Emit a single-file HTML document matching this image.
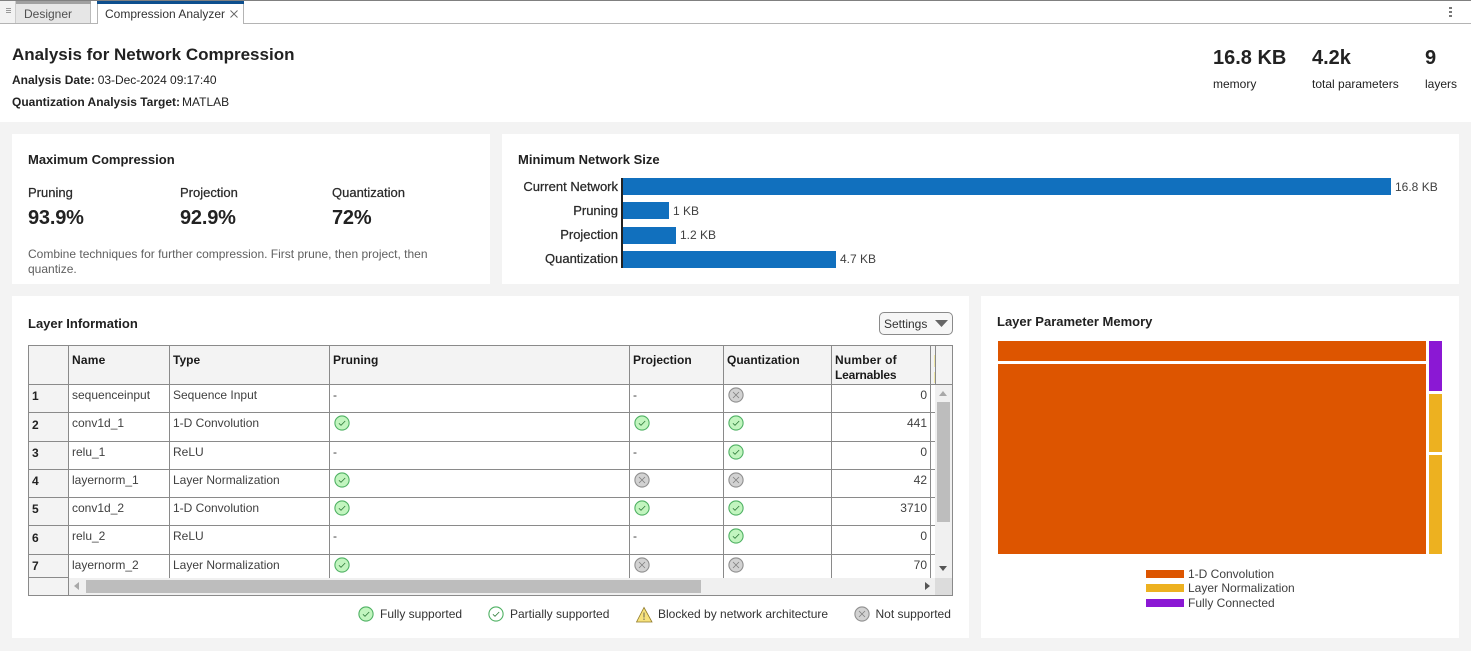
<!DOCTYPE html>
<html><head><meta charset="utf-8"><style>
html,body{margin:0;padding:0;width:1471px;height:651px;overflow:hidden;background:#f3f3f3;font-family:"Liberation Sans",Arial,sans-serif;color:#222}
div,span.a,svg.a{position:absolute}
.t{position:absolute;white-space:nowrap;line-height:14px;font-size:12px}
.b{font-weight:bold}
.h{font-size:13px;font-weight:bold;color:#212121}
.g{color:#404040}
.m{font-size:13px;color:#2a2a2a;-webkit-text-stroke:.25px #2a2a2a}
.th{font-weight:bold;color:#1a1a1a;font-size:12px}
.l{position:absolute;background:#8a8a8a}
.w{background:#fff}
svg.i{position:absolute;width:16px;height:16px}
</style></head><body>
<svg width="0" height="0" style="position:absolute"><defs>
<symbol id="ok" viewBox="0 0 16 16"><circle cx="8" cy="8" r="7.1" fill="#c2f5bf" stroke="#4fb163" stroke-width="1.1"/><path d="M4.9 8.3 7 10.3 11.2 6" fill="none" stroke="#2f7a3a" stroke-width=".8"/></symbol>
<symbol id="part" viewBox="0 0 16 16"><circle cx="8" cy="8" r="7.1" fill="#fff" stroke="#4fb163" stroke-width="1.1"/><path d="M4.9 8.3 7 10.3 11.2 6" fill="none" stroke="#2f7a3a" stroke-width=".8"/></symbol>
<symbol id="no" viewBox="0 0 16 16"><circle cx="8" cy="8" r="7.1" fill="#d2d2d2" stroke="#8f8f8f" stroke-width="1.1"/><path d="M5 5 11 11M11 5 5 11" fill="none" stroke="#808080" stroke-width=".8"/></symbol>
</defs></svg>

<!-- tab bar -->
<div class="w" style="left:0;top:0;width:1471px;height:23px"></div>
<div style="left:0;top:0;width:1471px;height:1px;background:#808080"></div>
<div style="left:0;top:23px;width:1471px;height:1px;background:#b4b4b4"></div>
<div style="left:0;top:1px;width:15px;height:22px;background:#f2f2f2"></div>
<div style="left:6px;top:8px;width:5px;height:6px;background:repeating-linear-gradient(#999 0 1px,#f2f2f2 1px 2px)"></div>
<div style="left:15px;top:1px;width:76px;height:22px;background:#e6e6e6;border-right:1px solid #bbb;border-left:1px solid #ccc;box-sizing:border-box"></div>
<div style="left:16px;top:1px;width:75px;height:3px;background:#a0a0a0"></div>
<div class="t" style="left:24px;top:7px;color:#505050">Designer</div>
<div class="w" style="left:97px;top:1px;width:147px;height:23px;box-sizing:border-box;border-left:1px solid #b4b4b4;border-right:1px solid #b4b4b4"></div>
<div style="left:97px;top:1px;width:147px;height:3px;background:#0e4f8e"></div>
<div class="t" style="left:105px;top:7px;color:#333">Compression Analyzer</div>
<svg class="a" style="left:229px;top:9px" width="10" height="10"><path d="M1.5 1.5 8.5 8.5M8.5 1.5 1.5 8.5" stroke="#666" stroke-width=".9" fill="none"/></svg>
<div style="left:1449px;top:7px;width:3px;height:2px;background:#777"></div>
<div style="left:1449px;top:11px;width:3px;height:2px;background:#777"></div>
<div style="left:1449px;top:15px;width:3px;height:2px;background:#777"></div>

<!-- header -->
<div class="w" style="left:0;top:24px;width:1471px;height:98px"></div>
<div class="t b" style="left:12px;top:46px;font-size:17px;line-height:18px;color:#212121">Analysis for Network Compression</div>
<div class="t" style="left:12px;top:73px"><span class="b">Analysis Date:</span><span style="margin-left:3px;letter-spacing:-.03px">03-Dec-2024 09:17:40</span></div>
<div class="t" style="left:12px;top:95px"><span class="b">Quantization Analysis Target:</span><span style="margin-left:2px">MATLAB</span></div>
<div class="t b" style="left:1213px;top:47px;font-size:20px;line-height:22px">16.8 KB</div>
<div class="t b" style="left:1312px;top:47px;font-size:20px;line-height:22px">4.2k</div>
<div class="t b" style="left:1425px;top:47px;font-size:20px;line-height:22px">9</div>
<div class="t" style="left:1213px;top:77px">memory</div>
<div class="t" style="left:1312px;top:77px">total parameters</div>
<div class="t" style="left:1425px;top:77px">layers</div>

<!-- panels -->
<div class="w" style="left:12px;top:134px;width:478px;height:150px"></div>
<div class="w" style="left:502px;top:134px;width:957px;height:150px"></div>
<div class="w" style="left:12px;top:296px;width:957px;height:342px"></div>
<div class="w" style="left:981px;top:296px;width:478px;height:342px"></div>

<!-- max compression -->
<div class="t h" style="left:28px;top:153px">Maximum Compression</div>
<div class="t m" style="left:28px;top:186px">Pruning</div>
<div class="t m" style="left:180px;top:186px">Projection</div>
<div class="t m" style="left:332px;top:186px">Quantization</div>
<div class="t b" style="left:28px;top:207px;font-size:20px;line-height:22px;letter-spacing:-.2px">93.9%</div>
<div class="t b" style="left:180px;top:207px;font-size:20px;line-height:22px;letter-spacing:-.2px">92.9%</div>
<div class="t b" style="left:332px;top:207px;font-size:20px;line-height:22px;letter-spacing:-.2px">72%</div>
<div class="t" style="left:28px;top:247px;color:#606060">Combine techniques for further compression. First prune, then project, then</div>
<div class="t" style="left:28px;top:262px;color:#606060">quantize.</div>

<!-- min size -->
<div class="t h" style="left:518px;top:153px">Minimum Network Size</div>
<div class="t m" style="right:853px;top:180px">Current Network</div>
<div class="t m" style="right:853px;top:204px">Pruning</div>
<div class="t m" style="right:853px;top:228px">Projection</div>
<div class="t m" style="right:853px;top:252px">Quantization</div>
<div style="left:623px;top:178px;width:768px;height:17px;background:#1170be"></div>
<div style="left:623px;top:202px;width:46px;height:17px;background:#1170be"></div>
<div style="left:623px;top:227px;width:53px;height:17px;background:#1170be"></div>
<div style="left:623px;top:251px;width:213px;height:17px;background:#1170be"></div>
<div style="left:621px;top:178px;width:2px;height:90px;background:#222"></div>
<div class="t g" style="left:1395px;top:180px">16.8 KB</div>
<div class="t g" style="left:673px;top:204px">1 KB</div>
<div class="t g" style="left:680px;top:228px">1.2 KB</div>
<div class="t g" style="left:840px;top:252px">4.7 KB</div>

<!-- layer info -->
<div class="t h" style="left:28px;top:317px">Layer Information</div>
<div style="left:879px;top:312px;width:74px;height:23px;box-sizing:border-box;border:1px solid #8a8a8a;border-radius:5px;background:#f6f6f6"></div>
<div class="t" style="left:884px;top:317px;color:#333">Settings</div>
<svg class="a" style="left:935px;top:320px" width="13" height="8"><path d="M0 0H13L6.5 7Z" fill="#666"/></svg>

<!-- table -->
<div style="left:28px;top:345px;width:925px;height:39px;background:#f3f3f3"></div>
<div style="left:28px;top:384px;width:40px;height:212px;background:#f3f3f3"></div>
<div style="left:935px;top:384px;width:18px;height:194px;background:#f0f0f0"></div>
<div style="left:69px;top:578px;width:866px;height:17px;background:#f0f0f0"></div>
<div style="left:935px;top:578px;width:18px;height:17px;background:#dcdcdc"></div>
<div style="left:86px;top:580px;width:615px;height:13px;background:#bdbdbd"></div>
<div style="left:937px;top:402px;width:13px;height:120px;background:#bdbdbd"></div>
<svg class="a" style="left:939px;top:391px" width="9" height="6"><path d="M0 5H8L4 0Z" fill="#a8a8a8"/></svg>
<svg class="a" style="left:939px;top:566px" width="9" height="6"><path d="M0 0H8L4 5Z" fill="#555"/></svg>
<svg class="a" style="left:74px;top:582px" width="6" height="9"><path d="M5 0V8L0 4Z" fill="#a8a8a8"/></svg>
<svg class="a" style="left:925px;top:582px" width="6" height="9"><path d="M0 0V8L5 4Z" fill="#555"/></svg>

<!-- grid -->
<div class="l" style="left:28px;top:345px;width:925px;height:1px"></div>
<div class="l" style="left:28px;top:595px;width:925px;height:1px"></div>
<div class="l" style="left:28px;top:345px;width:1px;height:251px"></div>
<div class="l" style="left:952px;top:345px;width:1px;height:251px"></div>
<div class="l" style="left:68px;top:345px;width:1px;height:251px"></div>
<div class="l" style="left:169px;top:345px;width:1px;height:233px"></div>
<div class="l" style="left:329px;top:345px;width:1px;height:233px"></div>
<div class="l" style="left:629px;top:345px;width:1px;height:233px"></div>
<div class="l" style="left:723px;top:345px;width:1px;height:233px"></div>
<div class="l" style="left:831px;top:345px;width:1px;height:233px"></div>
<div class="l" style="left:930px;top:345px;width:1px;height:233px"></div>
<div class="l" style="left:935px;top:345px;width:1px;height:39px"></div>
<div style="left:934px;top:355px;width:1px;height:12px;background:#f0e8a8"></div>
<div style="left:934px;top:372px;width:1px;height:11px;background:#f0e8a8"></div>
<div class="l" style="left:28px;top:384px;width:925px;height:1px"></div>
<div class="l" style="left:28px;top:412px;width:907px;height:1px"></div>
<div class="l" style="left:28px;top:441px;width:907px;height:1px"></div>
<div class="l" style="left:28px;top:469px;width:907px;height:1px"></div>
<div class="l" style="left:28px;top:497px;width:907px;height:1px"></div>
<div class="l" style="left:28px;top:525px;width:907px;height:1px"></div>
<div class="l" style="left:28px;top:554px;width:907px;height:1px"></div>
<div class="l" style="left:28px;top:577px;width:40px;height:1px"></div>

<!-- header text -->
<div class="t th" style="left:72px;top:353px;letter-spacing:.2px">Name</div>
<div class="t th" style="left:173px;top:353px">Type</div>
<div class="t th" style="left:333px;top:353px">Pruning</div>
<div class="t th" style="left:633px;top:353px">Projection</div>
<div class="t th" style="left:727px;top:353px">Quantization</div>
<div class="t th" style="left:835px;top:353px;letter-spacing:.2px">Number of</div>
<div class="t th" style="left:835px;top:368px;letter-spacing:-.2px">Learnables</div>

<!-- rows -->
<div class="t b" style="left:32px;top:389px">1</div>
<div class="t b" style="left:32px;top:418px">2</div>
<div class="t b" style="left:32px;top:446px">3</div>
<div class="t b" style="left:32px;top:474px">4</div>
<div class="t b" style="left:32px;top:502px">5</div>
<div class="t b" style="left:32px;top:531px">6</div>
<div class="t b" style="left:32px;top:559px">7</div>

<div class="t g" style="left:72px;top:388px">sequenceinput</div><div class="t g" style="left:173px;top:388px">Sequence Input</div>
<div class="t g" style="left:72px;top:416px">conv1d_1</div><div class="t g" style="left:173px;top:416px">1-D Convolution</div>
<div class="t g" style="left:72px;top:445px">relu_1</div><div class="t g" style="left:173px;top:445px">ReLU</div>
<div class="t g" style="left:72px;top:473px">layernorm_1</div><div class="t g" style="left:173px;top:473px">Layer Normalization</div>
<div class="t g" style="left:72px;top:501px">conv1d_2</div><div class="t g" style="left:173px;top:501px">1-D Convolution</div>
<div class="t g" style="left:72px;top:529px">relu_2</div><div class="t g" style="left:173px;top:529px">ReLU</div>
<div class="t g" style="left:72px;top:558px">layernorm_2</div><div class="t g" style="left:173px;top:558px">Layer Normalization</div>

<div class="t g" style="left:333px;top:388px">-</div><div class="t g" style="left:633px;top:388px">-</div>
<div class="t g" style="left:333px;top:445px">-</div><div class="t g" style="left:633px;top:445px">-</div>
<div class="t g" style="left:333px;top:529px">-</div><div class="t g" style="left:633px;top:529px">-</div>

<div class="t g" style="right:544px;top:388px">0</div>
<div class="t g" style="right:544px;top:416px">441</div>
<div class="t g" style="right:544px;top:445px">0</div>
<div class="t g" style="right:544px;top:473px">42</div>
<div class="t g" style="right:544px;top:501px">3710</div>
<div class="t g" style="right:544px;top:529px">0</div>
<div class="t g" style="right:544px;top:558px">70</div>

<svg class="i" style="left:728px;top:387px"><use href="#no"/></svg>
<svg class="i" style="left:334px;top:415px"><use href="#ok"/></svg><svg class="i" style="left:634px;top:415px"><use href="#ok"/></svg><svg class="i" style="left:728px;top:415px"><use href="#ok"/></svg>
<svg class="i" style="left:728px;top:444px"><use href="#ok"/></svg>
<svg class="i" style="left:334px;top:472px"><use href="#ok"/></svg><svg class="i" style="left:634px;top:472px"><use href="#no"/></svg><svg class="i" style="left:728px;top:472px"><use href="#no"/></svg>
<svg class="i" style="left:334px;top:500px"><use href="#ok"/></svg><svg class="i" style="left:634px;top:500px"><use href="#ok"/></svg><svg class="i" style="left:728px;top:500px"><use href="#ok"/></svg>
<svg class="i" style="left:728px;top:528px"><use href="#ok"/></svg>
<svg class="i" style="left:334px;top:557px"><use href="#ok"/></svg><svg class="i" style="left:634px;top:557px"><use href="#no"/></svg><svg class="i" style="left:728px;top:557px"><use href="#no"/></svg>

<!-- legend -->
<svg class="i" style="left:358px;top:606px"><use href="#ok"/></svg>
<div class="t" style="left:380px;top:607px;color:#333">Fully supported</div>
<svg class="i" style="left:488px;top:606px"><use href="#part"/></svg>
<div class="t" style="left:510px;top:607px;color:#333">Partially supported</div>
<svg class="a" style="left:636px;top:606px" width="17" height="17"><path d="M8 1.5 16 16H0.5Z" fill="#f7e27c" stroke="#8f7a2a" stroke-width=".8"/><path d="M8 6.5V11.5M8 12.5V14" stroke="#555" stroke-width=".9"/></svg>
<div class="t" style="left:658px;top:607px;color:#333">Blocked by network architecture</div>
<svg class="i" style="left:854px;top:606px"><use href="#no"/></svg>
<div class="t" style="left:875.5px;top:607px;color:#333">Not supported</div>

<!-- treemap -->
<div class="t h" style="left:997px;top:315px">Layer Parameter Memory</div>
<div style="left:998px;top:341px;width:428px;height:20px;background:#dd5500"></div>
<div style="left:998px;top:364px;width:428px;height:190px;background:#dd5500"></div>
<div style="left:1429px;top:341px;width:13px;height:50px;background:#8b18d4"></div>
<div style="left:1429px;top:394px;width:13px;height:58px;background:#edb120"></div>
<div style="left:1429px;top:455px;width:13px;height:99px;background:#edb120"></div>
<div style="left:1146px;top:570px;width:38px;height:8px;background:#dd5500"></div>
<div style="left:1146px;top:584px;width:38px;height:8px;background:#edb120"></div>
<div style="left:1146px;top:599px;width:38px;height:8px;background:#8b18d4"></div>
<div class="t g" style="left:1188px;top:567px">1-D Convolution</div>
<div class="t g" style="left:1188px;top:581px">Layer Normalization</div>
<div class="t g" style="left:1188px;top:596px">Fully Connected</div>
</body></html>
